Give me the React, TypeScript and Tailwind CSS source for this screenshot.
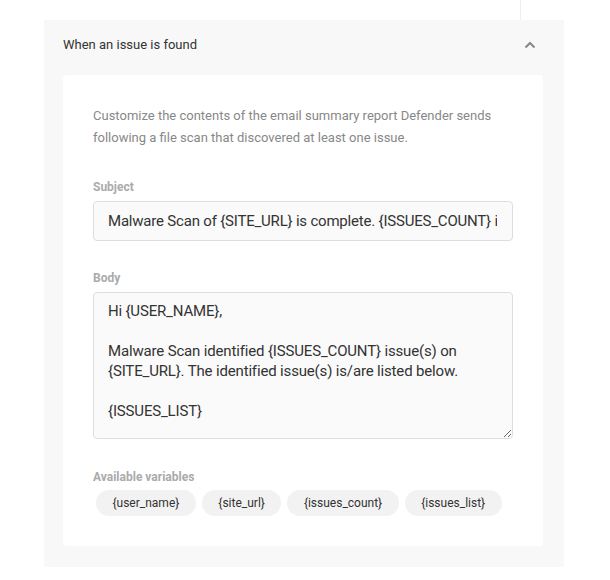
import React from "react";

export default function App() {
  const vars = ["{user_name}", "{site_url}", "{issues_count}", "{issues_list}"];
  const body =
    "Hi {USER_NAME},\n\nMalware Scan identified {ISSUES_COUNT} issue(s) on {SITE_URL}. The identified issue(s) is/are listed below.\n\n{ISSUES_LIST}";
  return (
    <div
      className="w-[610px] h-[580px] bg-white"
      style={{ fontFamily: "Roboto, 'Liberation Sans', sans-serif" }}
    >
      <div className="flex h-[20px]">
        <div className="w-[520px]" />
        <div className="w-px bg-[#eeeeee]" />
      </div>
      <div className="ml-[44px] w-[520px] bg-[#f8f8f8] pl-[19px] pr-[21px] pb-[21px]">
        <div className="flex items-center justify-between pt-[15px] pb-[20px] text-[13px] leading-[20px] text-[#333333]">
          <span>When an issue is found</span>
          <svg width="12" height="8" viewBox="0 0 12 8" className="mr-[7px]">
            <path d="M1.5 6.5 L6 2 L10.5 6.5" fill="none" stroke="#888888" strokeWidth="2" />
          </svg>
        </div>
        <div className="bg-white rounded-[4px] px-[30px] pt-[30px] pb-[30px]">
          <p className="text-[13px] leading-[22px] text-[#888888]">
            Customize the contents of the email summary report Defender sends
            following a file scan that discovered at least one issue.
          </p>
          <div className="mt-[30px] text-[12px] leading-[16px] font-bold text-[#aaaaaa]">
            Subject
          </div>
          <input
            readOnly
            value="Malware Scan of {SITE_URL} is complete. {ISSUES_COUNT} issue(s) found."
            className="mt-[6px] block w-full h-[40px] rounded-[4px] border border-[#dddddd] bg-[#fafafa] pl-[14px] pr-[15px] text-[15px] tracking-[-0.2px] text-[#333333] outline-none"
            style={{ fontFamily: "Roboto, 'Liberation Sans', sans-serif" }}
          />
          <div className="mt-[29px] text-[12px] leading-[16px] font-bold text-[#aaaaaa]">
            Body
          </div>
          <textarea
            readOnly
            defaultValue={body}
            className="mt-[6px] block w-full h-[147px] rounded-[4px] border border-[#dddddd] bg-[#fafafa] px-[14px] py-[8px] text-[15px] leading-[20px] tracking-[-0.16px] text-[#333333] outline-none overflow-hidden"
            style={{ fontFamily: "Roboto, 'Liberation Sans', sans-serif" }}
          />
          <div className="mt-[30px] text-[12px] leading-[16px] font-bold text-[#aaaaaa]">
            Available variables
          </div>
          <div className="mt-[5px] ml-[3px] flex gap-[6px]">
            {vars.map((v) => (
              <span
                key={v}
                className="h-[26px] flex items-center rounded-full bg-[#f2f2f2] px-[16.5px] text-[12px] text-[#333333]"
              >
                {v}
              </span>
            ))}
          </div>
        </div>
      </div>
    </div>
  );
}
